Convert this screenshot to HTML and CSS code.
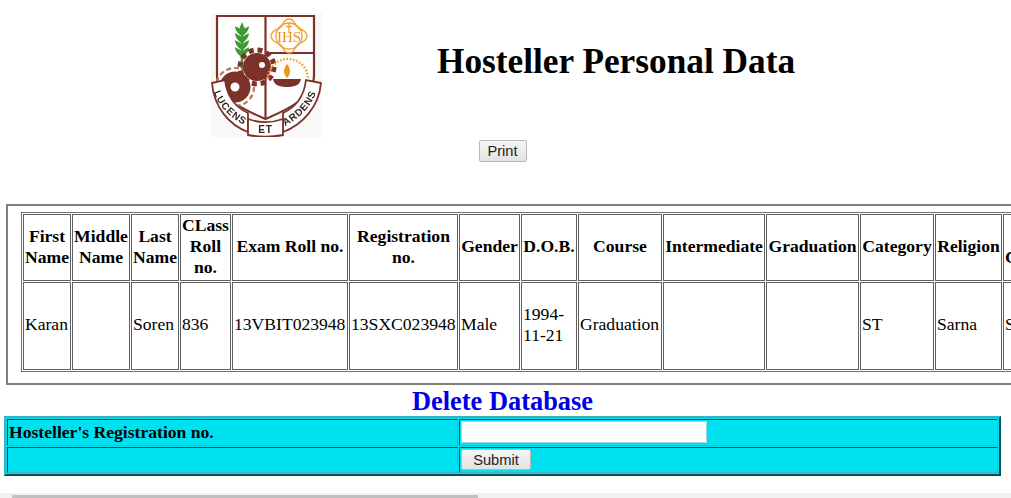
FILE: index.html
```html
<!DOCTYPE html>
<html lang="en">
<head>
<meta charset="utf-8">
<title>Hosteller Personal Data</title>
<link rel="stylesheet" href="styles.css">
</head>
<body>
<div class="page">
  <header class="masthead">
    <svg class="logo" viewBox="0 0 111 124" width="111" height="124" role="img" aria-label="College crest">
      <rect width="111" height="124" fill="#f9f8f8"/>
      <path d="M6 3H103V62C103 84 78 96 54.500 106C31 96 6 84 6 62Z" fill="#fff" stroke="#7d3229" stroke-width="2.200"/>
      <path d="M54.500 3V106M54.500 40H103" fill="none" stroke="#7d3229" stroke-width="2.200"/>
      <path d="M31 18V62" stroke="#3f9a35" stroke-width="2.600" fill="none"/>
      <path d="M31 9l-2.500 6 2.500 4 2.500-4zM31 18c-2-3-6-4-7-5 0 4 3 8 7 10 4-2 7-6 7-10-1 1-5 2-7 5zM31 25c-2-3-6-4-7-5 0 4 3 8 7 10 4-2 7-6 7-10-1 1-5 2-7 5zM31 32c-2-3-6-4-7-5 0 4 3 8 7 10 4-2 7-6 7-10-1 1-5 2-7 5zM31 39c-2-3-6-4-7-5 0 4 3 8 7 10 4-2 7-6 7-10-1 1-5 2-7 5z" fill="#3f9a35"/>
      <circle cx="24" cy="74" r="19" fill="#fff" stroke="#b9735a" stroke-width="2.200" stroke-dasharray="5 3"/>
      <circle cx="24" cy="74" r="10" fill="none" stroke="#7d3229" stroke-width="11"/>
      <circle cx="46" cy="54" r="14" fill="#7d3229"/>
      <circle cx="46" cy="54" r="17" fill="none" stroke="#7d3229" stroke-width="5" stroke-dasharray="5 3.900"/>
      <circle cx="51" cy="52" r="3" fill="#fff"/>
      <g fill="none" stroke="#f0a030" stroke-width="1.300">
        <circle cx="78" cy="23" r="13"/>
        <ellipse cx="78" cy="23" rx="18" ry="9"/>
        <ellipse cx="78" cy="23" rx="9" ry="17"/>
      </g>
      <circle cx="78" cy="23" r="11.500" fill="#fff"/>
      <text x="78" y="29" class="logo-ihs">IHS</text>
      <path d="M78 10V20M75 13.500H81" stroke="#f0a030" stroke-width="1.300"/>
      <path d="M57 66A20 20 0 0 1 97 66" fill="none" stroke="#f0a030" stroke-width="2.600" stroke-dasharray="1.600 1.700"/>
      <path d="M62 66H90C89 72 84 74 76 74C68 74 63 72 62 66Z" fill="#7d3229"/>
      <path d="M76 51C72 56 72 61 76 65C80 61 80 56 76 51Z" fill="#f0951e"/>
      <path d="M1 70L14 67C16 84 24 94 37 100V119C18 112 3 94 1 70Z" fill="#fff" stroke="#7d3229" stroke-width="1.800"/>
      <path d="M110 70L95 67C93 84 85 94 72 100V119C91 112 108 94 110 70Z" fill="#fff" stroke="#7d3229" stroke-width="1.800"/>
      <path d="M37 106C48 110 61 110 72 106V122C61 124 48 124 37 122Z" fill="#fff" stroke="#7d3229" stroke-width="1.800"/>
      <path id="ribbon-left" d="M3 79C7 93 19 105 35 113" fill="none"/>
      <path id="ribbon-right" d="M74 113C90 105 102 92 107 74" fill="none"/>
      <text class="logo-motto"><textPath href="#ribbon-left">LUCENS</textPath></text>
      <text class="logo-motto"><textPath href="#ribbon-right">ARDENS</textPath></text>
      <text x="54.500" y="120" class="logo-motto logo-et">ET</text>
    </svg>
    <h1 class="title">Hosteller Personal Data</h1>
  </header>

  <div class="print-row"><button class="btn btn-print" type="button">Print</button></div>

  <div class="data-box">
    <table class="data">
      <colgroup>
        <col class="c1"><col class="c2"><col class="c3"><col class="c4"><col class="c5"><col class="c6"><col class="c7">
        <col class="c8"><col class="c9"><col class="c10"><col class="c11"><col class="c12"><col class="c13"><col class="c14">
      </colgroup>
      <tr class="head-row">
        <th>First Name</th><th>Middle Name</th><th>Last Name</th><th>CLass Roll no.</th><th>Exam Roll no.</th>
        <th>Registration no.</th><th>Gender</th><th>D.O.B.</th><th>Course</th><th>Intermediate</th>
        <th>Graduation</th><th>Category</th><th>Religion</th><th>Sub Caste</th>
      </tr>
      <tr class="body-row">
        <td>Karan</td><td></td><td>Soren</td><td>836</td><td>13VBIT023948</td>
        <td>13SXC023948</td><td>Male</td><td>1994-11-21</td><td>Graduation</td><td></td>
        <td></td><td>ST</td><td>Sarna</td><td>Santal</td>
      </tr>
    </table>
  </div>

  <h2 class="delete-title">Delete Database</h2>

  <table class="delete">
    <tr>
      <th class="label">Hosteller's Registration no.</th>
      <td><input class="reg-input" type="text"></td>
    </tr>
    <tr>
      <th class="label"></th>
      <td><button class="btn btn-submit" type="button">Submit</button></td>
    </tr>
  </table>
</div>
<div class="hscroll"><div class="hscroll-thumb"></div></div>
</body>
</html>
```

FILE: styles.css
```css
html, body {
  margin: 0;
  height: 498px;
  overflow: hidden;
  background: #fff;
}

body {
  position: relative;
  font-family: "Liberation Serif", "Times New Roman", serif;
  font-size: 17.6px;
  color: #000;
}

.page {
  width: 997px;
  margin-left: 4px;
}

.masthead {
  display: flex;
  align-items: flex-start;
  padding: 13px 0 0 207px;
  height: 124px;
}

.logo {
  flex: none;
  display: block;
  filter: blur(0.4px);
}

.logo-ihs {
  font-family: "Liberation Serif", serif;
  font-size: 15px;
  fill: #e8921e;
  text-anchor: middle;
}

.logo-motto {
  font-family: "Liberation Sans", Arial, sans-serif;
  font-size: 10px;
  font-weight: bold;
  letter-spacing: 0.8px;
  fill: #3a2420;
}

.logo-et {
  text-anchor: middle;
}

.title {
  margin: 29px 0 0 115px;
  font-size: 35.300px;
  line-height: 40px;
  font-weight: bold;
  white-space: nowrap;
}

.print-row {
  margin-top: 3px;
  height: 22px;
  text-align: center;
}

.btn {
  box-sizing: border-box;
  height: 22px;
  padding: 0;
  border: 1px solid #b8b8b8;
  border-radius: 2px;
  background: linear-gradient(#f5f5f5, #e3e3e3);
  font-family: "Liberation Sans", Arial, sans-serif;
  font-size: 14.670px;
  color: #222;
}

.btn-print {
  width: 48px;
}

.btn-submit {
  display: block;
  width: 70px;
  height: 21px;
}

.data-box {
  box-sizing: border-box;
  width: 1100px;
  height: 181px;
  margin: 42px 0 0 2px;
  padding: 6px 0 0 13px;
  border: 2px solid #808080;
  border-right: 0;
}

.data {
  table-layout: fixed;
  width: 1030px;
  border: 1px solid #707070;
  border-spacing: 1px;
  border-collapse: separate;
}

.data th,
.data td {
  padding: 1px;
  border: 1px solid #606060;
  line-height: 21px;
}

.data th {
  padding-top: 0;
  padding-bottom: 2px;
  text-align: center;
  vertical-align: middle;
}

.data td {
  padding-bottom: 4px;
  text-align: left;
  vertical-align: middle;
}

.head-row { height: 67px; }
.body-row { height: 88px; }

.c1 { width: 48px; }
.c2 { width: 58px; }
.c3 { width: 48px; }
.c4 { width: 51px; }
.c5 { width: 116px; }
.c6 { width: 109px; }
.c7 { width: 61px; }
.c8 { width: 56px; }
.c9 { width: 84px; }
.c10 { width: 102px; }
.c11 { width: 93px; }
.c12 { width: 74px; }
.c13 { width: 67px; }
.c14 { width: 46px; }

.delete-title {
  margin: 0;
  height: 31px;
  font-size: 26.400px;
  line-height: 32px;
  font-weight: bold;
  text-align: center;
  color: #0000e6;
}

.delete {
  box-sizing: border-box;
  width: 997px;
  background: #00e1f0;
  border-style: solid;
  border-width: 2px;
  border-color: #3fb0bd #00525c #00525c #3fb0bd;
  border-spacing: 1px;
  border-collapse: separate;
}

.delete th,
.delete td {
  box-sizing: border-box;
  height: 26.500px;
  padding: 1px;
  border-style: solid;
  border-width: 1px;
  border-color: #00525c #3fb0bd #3fb0bd #00525c;
}

.delete .label {
  width: 451px;
  text-align: left;
  font-size: 17.6px;
  font-weight: bold;
}

.reg-input {
  box-sizing: border-box;
  display: block;
  width: 246px;
  height: 22px;
  padding: 0 2px;
  border: 1px solid #9fd7df;
  background: #fff;
}

.hscroll {
  position: absolute;
  left: 0;
  right: 0;
  bottom: 0;
  height: 5px;
  background: #f1f1f1;
}

.hscroll-thumb {
  width: 466px;
  height: 3px;
  margin: 2px 0 0 12px;
  background: #c1c1c1;
}
```
